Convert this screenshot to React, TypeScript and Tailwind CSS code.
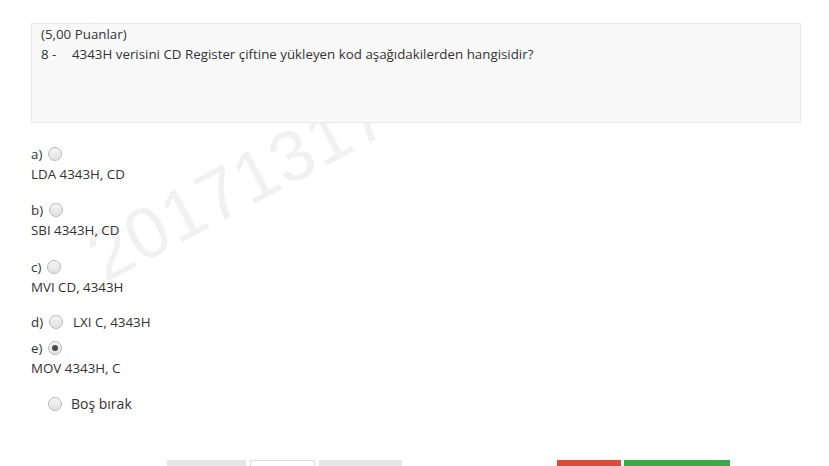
import type { ReactNode } from "react";

type Option = {
    key: string;
    text: string;
    inline?: boolean;
    checked?: boolean;
    gap: string;
};

const options: Option[] = [
    { key: "a", text: "LDA 4343H, CD", gap: "mb-[15px]" },
    { key: "b", text: "SBI 4343H, CD", gap: "mb-[16px]" },
    { key: "c", text: "MVI CD, 4343H", gap: "mb-[15px]" },
    { key: "d", text: "LXI C, 4343H", inline: true, gap: "mb-[5px]" },
    { key: "e", text: "MOV 4343H, C", checked: true, gap: "mb-[16px]" },
];

function Radio({ checked = false }: { checked?: boolean }) {
    return (
        <span className="relative inline-flex h-[14px] w-[14px] items-center justify-center rounded-full border border-[#b9b9b9] bg-gradient-to-b from-[#f5f5f5] to-[#e2e2e2]">
            {checked ? (
                <span className="h-[6px] w-[6px] rounded-full bg-[#4a4a4a]" />
            ) : null}
        </span>
    );
}

function Label({ children }: { children: ReactNode }) {
    return <span className="mr-[6px]">{children}</span>;
}

export default function App() {
    return (
        <div className="relative h-[466px] w-[829px] overflow-hidden bg-white font-['Open_Sans',sans-serif] text-[13.33px] leading-[20px] text-[#333]">
            {/* watermark */}
            <div className="pointer-events-none absolute left-[110px] top-[221px] origin-[0_100%] -rotate-[28deg] select-none font-['Liberation_Sans',Arial,sans-serif] text-[72px] leading-none tracking-[1px] text-[#f1f1f1]">
                2017131706
            </div>

            <div className="relative pl-[31px] pr-[28px] pt-[23px]">
                <div className="h-[100px] border border-[#e8e8e8] bg-[#f9f9f9] pl-[9px] pr-4">
                    <div>(5,00 Puanlar)</div>
                    <div className="flex">
                        <span className="inline-block w-[31px]">8 -</span>
                        <span>
                            4343H verisini CD Register çiftine yükleyen kod
                            aşağıdakilerden hangisidir?
                        </span>
                    </div>
                </div>

                <div className="mt-[20px]">
                    {options.map((opt) =>
                        opt.inline ? (
                            <div
                                key={opt.key}
                                className={`${opt.gap} flex h-[20px] items-center`}
                            >
                                <Label>{opt.key})</Label>
                                <Radio />
                                <span className="ml-[10px]">{opt.text}</span>
                            </div>
                        ) : (
                            <div key={opt.key} className={opt.gap}>
                                <div className="flex h-[21px] items-center">
                                    <Label>{opt.key})</Label>
                                    <Radio checked={opt.checked} />
                                </div>
                                <div>{opt.text}</div>
                            </div>
                        ),
                    )}

                    <div className="mt-[9px] flex h-[20px] items-center pl-[17px] text-[14px]">
                        <Radio />
                        <span className="ml-[9px]">Boş bırak</span>
                    </div>
                </div>

                <div className="mt-[46px] flex">
                    <div className="ml-[136px] flex gap-[4px]">
                        <div className="h-[30px] w-[79px] bg-[#e6e6e6]" />
                        <div className="h-[30px] w-[65px] border border-[#dcdcdc] bg-white" />
                        <div className="h-[30px] w-[83px] bg-[#e6e6e6]" />
                    </div>
                    <div className="ml-[155px] flex gap-[3px]">
                        <div className="h-[30px] w-[64px] bg-[#d74c3a]" />
                        <div className="h-[30px] w-[106px] bg-[#3aa949]" />
                    </div>
                </div>
            </div>
        </div>
    );
}
